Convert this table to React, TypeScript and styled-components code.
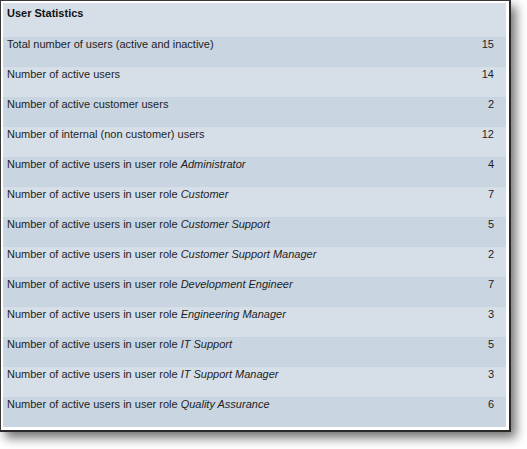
import React from "react";
import styled, { createGlobalStyle } from "styled-components";

const Global = createGlobalStyle`
  html, body { margin: 0; padding: 0; background: #ffffff; }
  body { font-family: "Liberation Sans", Arial, sans-serif; }
`;

const Page = styled.div`
  width: 527px;
  height: 449px;
  overflow: hidden;
  background: #ffffff;
`;

const Frame = styled.div`
  width: 511px;
  box-sizing: border-box;
  border-top: 1px solid #3a3a3a;
  border-left: 1px solid #3a3a3a;
  border-right: 2px solid #2a2a2a;
  border-bottom: 2px solid #2a2a2a;
  background: #ffffff;
  padding: 2px 3px 3px 2px;
  box-shadow: 5px 6px 10px rgba(0, 0, 0, 0.55);
`;

const Panel = styled.div`
  background: #d6dee8;
  display: flex;
  flex-direction: column;
`;

const Header = styled.div`
  height: 34px;
  box-sizing: border-box;
  padding: 4px 4px 0;
  font-size: 11px;
  font-weight: bold;
  color: #111;
  line-height: 13px;
`;

const Row = styled.div<{ $dark: boolean }>`
  height: 30px;
  box-sizing: border-box;
  padding: 1px 12px 0 4px;
  display: flex;
  justify-content: space-between;
  align-items: flex-start;
  font-size: 11px;
  line-height: 13px;
  color: #1e1e1e;
  background: ${(p) => (p.$dark ? "#c9d5e1" : "#d6dee8")};
`;

const Label = styled.span``;

const Role = styled.em`
  font-style: italic;
`;

const Value = styled.span`
  text-align: right;
`;

const rows: { label: string; role?: string; value: number }[] = [
  { label: "Total number of users (active and inactive)", value: 15 },
  { label: "Number of active users", value: 14 },
  { label: "Number of active customer users", value: 2 },
  { label: "Number of internal (non customer) users", value: 12 },
  { label: "Number of active users in user role", role: "Administrator", value: 4 },
  { label: "Number of active users in user role", role: "Customer", value: 7 },
  { label: "Number of active users in user role", role: "Customer Support", value: 5 },
  { label: "Number of active users in user role", role: "Customer Support Manager", value: 2 },
  { label: "Number of active users in user role", role: "Development Engineer", value: 7 },
  { label: "Number of active users in user role", role: "Engineering Manager", value: 3 },
  { label: "Number of active users in user role", role: "IT Support", value: 5 },
  { label: "Number of active users in user role", role: "IT Support Manager", value: 3 },
  { label: "Number of active users in user role", role: "Quality Assurance", value: 6 },
];

export default function App() {
  return (
    <Page>
      <Global />
      <Frame>
        <Panel>
          <Header>User Statistics</Header>
          {rows.map((r, i) => (
            <Row key={i} $dark={i % 2 === 0}>
              <Label>
                {r.label}
                {r.role && (
                  <>
                    {" "}
                    <Role>{r.role}</Role>
                  </>
                )}
              </Label>
              <Value>{r.value}</Value>
            </Row>
          ))}
        </Panel>
      </Frame>
    </Page>
  );
}
